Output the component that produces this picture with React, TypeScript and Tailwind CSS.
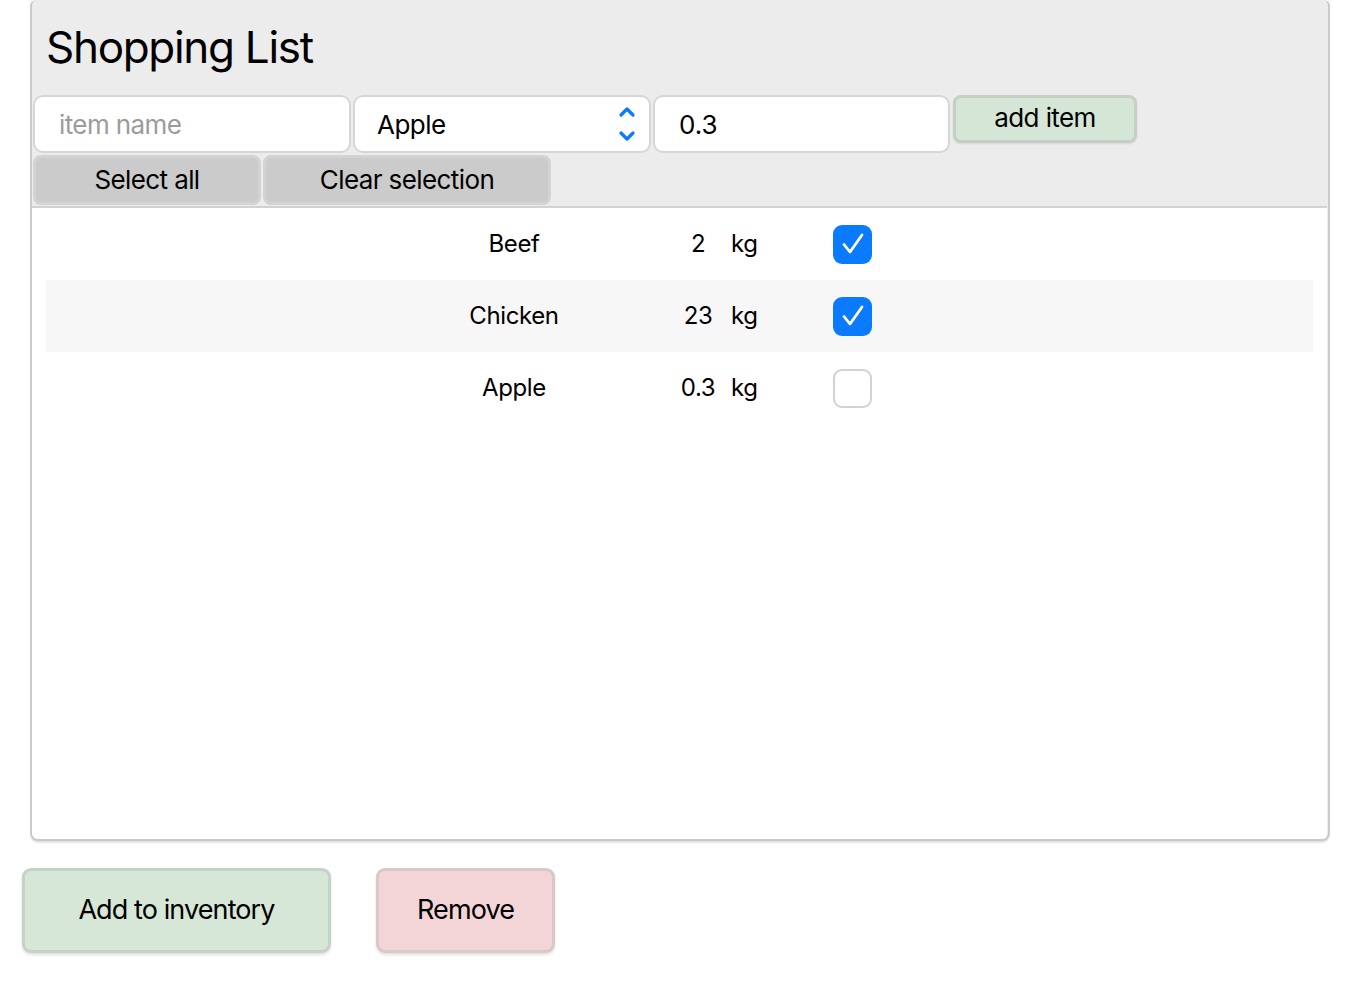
import React, { useState } from 'react';

type Item = {
  id: number;
  name: string;
  qty: string;
  unit: string;
  checked: boolean;
};

const initialItems: Item[] = [
  { id: 1, name: 'Beef', qty: '2', unit: 'kg', checked: true },
  { id: 2, name: 'Chicken', qty: '23', unit: 'kg', checked: true },
  { id: 3, name: 'Apple', qty: '0.3', unit: 'kg', checked: false },
];

const SelectArrows: React.FC = () => (
  <svg width="18" height="38" viewBox="0 0 18 38" fill="none" stroke="#0a7aff" strokeWidth="3.2" strokeLinecap="round" strokeLinejoin="round">
    <path d="M3 10 L9 4 L15 10" />
    <path d="M3 28 L9 34 L15 28" />
  </svg>
);

const Checkbox: React.FC<{ checked: boolean; onChange: () => void }> = ({ checked, onChange }) => (
  <button
    onClick={onChange}
    className={`w-[39px] h-[39px] rounded-[9px] flex items-center justify-center ${
      checked ? 'bg-[#0a7aff]' : 'bg-white border-2 border-[#d1d1d6]'
    }`}
  >
    {checked && (
      <svg width="30" height="30" viewBox="0 0 30 30" fill="none" stroke="white" strokeWidth="2.8" strokeLinecap="round" strokeLinejoin="round">
        <path d="M6 15.5 L12 23 L24 6" />
      </svg>
    )}
  </button>
);

const App: React.FC = () => {
  const [items, setItems] = useState<Item[]>(initialItems);
  const [name, setName] = useState('');
  const [kind, setKind] = useState('Apple');
  const [qty, setQty] = useState('0.3');

  const toggle = (id: number) => {
    setItems(items.map(i => (i.id === id ? { ...i, checked: !i.checked } : i)));
  };

  const addItem = () => {
    const n = name.trim() || kind;
    setItems([...items, { id: Date.now(), name: n, qty, unit: 'kg', checked: false }]);
    setName('');
  };

  return (
    <div className="min-h-screen bg-white text-black" style={{ fontFamily: 'Inter, "Noto Sans", sans-serif' }}>
      <div className="ml-[30px] w-[1300px] border-2 border-t-0 border-[#c9c9cd] rounded-b-[8px] rounded-t-[6px] bg-[#ececec] overflow-hidden shadow-[0_2px_1px_rgba(0,0,0,0.1)]">
        <div className="h-[95px] flex items-center pl-[14px]">
          <h1 className="text-[44px] leading-none tracking-[-1.3px] pb-[2px]">Shopping List</h1>
        </div>

        <div className="flex items-start pl-px">
          <input
            value={name}
            onChange={e => setName(e.target.value)}
            placeholder="item name"
            className="w-[318px] h-[58px] bg-white border-2 border-[#d6d6da] rounded-[10px] pl-[24px] text-[26px] tracking-[-0.6px] outline-none placeholder:text-[#9b9b9b]"
          />
          <div className="relative ml-[2px] w-[298px] h-[58px] bg-white border-2 border-[#d6d6da] rounded-[10px]">
            <select
              value={kind}
              onChange={e => setKind(e.target.value)}
              className="appearance-none w-full h-full bg-transparent pl-[22px] text-[26px] tracking-[-0.5px] outline-none"
            >
              <option>Apple</option>
              <option>Beef</option>
              <option>Chicken</option>
            </select>
            <div className="absolute right-[13px] top-[8px] pointer-events-none">
              <SelectArrows />
            </div>
          </div>
          <input
            value={qty}
            onChange={e => setQty(e.target.value)}
            className="ml-[2px] w-[297px] h-[58px] bg-white border-2 border-[#d6d6da] rounded-[10px] pl-[24px] text-[26px] outline-none"
          />
          <button
            onClick={addItem}
            className="ml-[3px] w-[184px] h-[48px] bg-[#d5e6d6] border-[3px] border-[#c6cfc6] rounded-[8px] text-[26px] tracking-[-0.6px] leading-none pb-[2px] shadow-[0_1px_2px_rgba(0,0,0,0.1)]"
          >
            add item
          </button>
        </div>

        <div className="flex pl-px mt-[2px] pb-[1px]">
          <button
            onClick={() => setItems(items.map(i => ({ ...i, checked: true })))}
            className="w-[228px] h-[50px] bg-[#cbcbcb] border-[3px] border-[#d3d3d3] rounded-[8px] text-[26px] tracking-[-0.6px] leading-none"
          >
            Select all
          </button>
          <button
            onClick={() => setItems(items.map(i => ({ ...i, checked: false })))}
            className="ml-[2px] w-[288px] h-[50px] bg-[#cbcbcb] border-[3px] border-[#d3d3d3] rounded-[8px] text-[26px] tracking-[-0.6px] leading-none"
          >
            Clear selection
          </button>
        </div>

        <div className="h-[633px] bg-white border-t-2 border-[#d1d1d6] mr-px">
          {items.map((item, index) => (
            <div
              key={item.id}
              className={`mx-[14px] h-[72px] flex items-center pl-[388px] text-[24px] tracking-[-0.4px] ${
                index % 2 === 1 ? 'bg-[#f7f7f7]' : ''
              }`}
            >
              <span className="w-[160px] text-center">{item.name}</span>
              <span className="ml-[74px] w-[60px] text-center">{item.qty}</span>
              <span className="ml-[3px] w-[28px]">{item.unit}</span>
              <span className="ml-[74px] flex">
                <Checkbox checked={item.checked} onChange={() => toggle(item.id)} />
              </span>
            </div>
          ))}
        </div>
      </div>

      <div className="flex pl-[22px] mt-[27px] gap-[45px]">
        <button className="w-[309px] h-[85px] bg-[#d6e7d7] border-[3px] border-[#c7d1c8] rounded-[9px] text-[27px] tracking-[-0.9px] shadow-[0_2px_3px_rgba(0,0,0,0.12)]">
          Add to inventory
        </button>
        <button
          onClick={() => setItems(items.filter(i => !i.checked))}
          className="w-[179px] h-[85px] bg-[#f3d5d8] border-[3px] border-[#d9c7c9] rounded-[9px] text-[27px] tracking-[-0.9px] shadow-[0_2px_3px_rgba(0,0,0,0.12)]"
        >
          Remove
        </button>
      </div>
    </div>
  );
};

export default App;
